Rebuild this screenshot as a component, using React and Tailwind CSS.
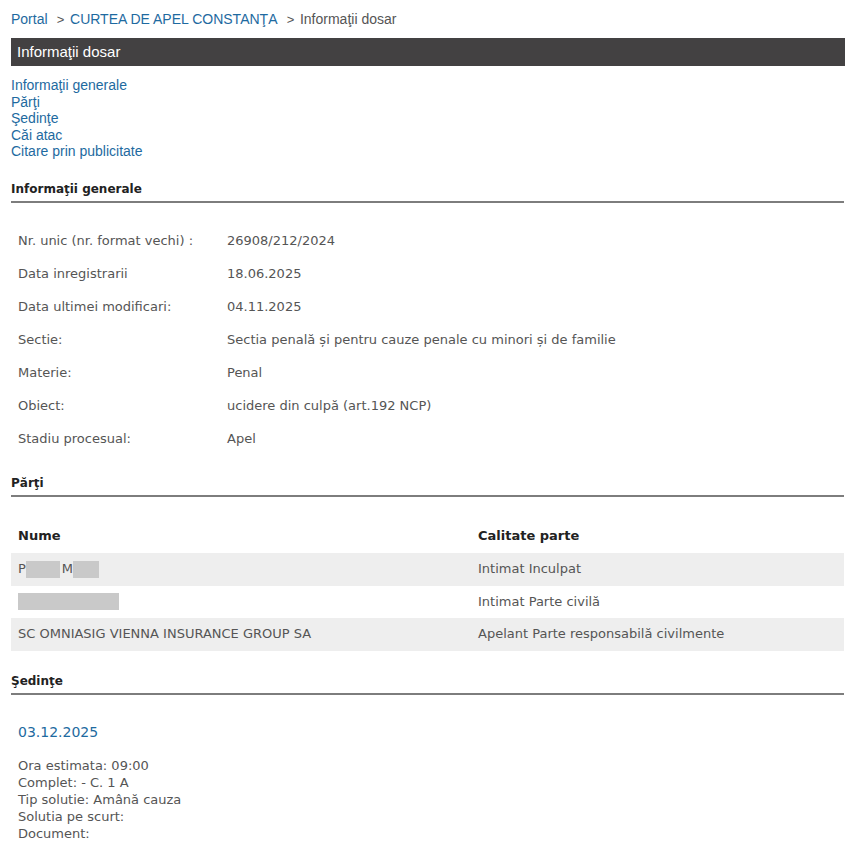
const info = [
  ["Nr. unic (nr. format vechi) :", "26908/212/2024"],
  ["Data inregistrarii", "18.06.2025"],
  ["Data ultimei modificari:", "04.11.2025"],
  ["Sectie:", "Sectia penală și pentru cauze penale cu minori și de familie"],
  ["Materie:", "Penal"],
  ["Obiect:", "ucidere din culpă (art.192 NCP)"],
  ["Stadiu procesual:", "Apel"],
];

const Redacted = ({ w }) => (
  <span className="inline-block h-[17px] bg-[#c9c9c9] align-middle" style={{ width: w }} />
);

const SectionTitle = ({ children }) => (
  <div className="border-b-2 border-[#7d7d7d] pb-[3px] font-['DejaVu_Sans',sans-serif] text-[12px] font-bold text-[#222]">
    {children}
  </div>
);

export default function App() {
  return (
    <div className="min-h-[855px] bg-white px-[11px] pt-[11px] font-['Liberation_Sans',Arial,sans-serif] text-[14px]">
      <div className="leading-[16px] text-[#555]">
        <a className="text-[#1e6aa0]">Portal</a>
        <span className="px-[2px] text-[13px]"> &nbsp;&gt;&nbsp;</span>
        <a className="text-[#1e6aa0]">CURTEA DE APEL CONSTANŢA</a>
        <span className="px-[2px] text-[13px]"> &nbsp;&gt;&nbsp;</span>
        Informaţii dosar
      </div>

      <div className="mr-[-1px] mt-[10px] flex h-[28px] items-center bg-[#434142] px-[6px] text-[15px] text-white">
        Informaţii dosar
      </div>

      <div className="mt-[11px] flex flex-col text-[#1e6aa0] leading-[16.5px]">
        <a>Informaţii generale</a>
        <a>Părţi</a>
        <a>Şedinţe</a>
        <a>Căi atac</a>
        <a>Citare prin publicitate</a>
      </div>

      <div className="mt-[20px]">
        <SectionTitle>Informaţii generale</SectionTitle>
      </div>
      <div className="mt-[22px] font-['DejaVu_Sans',sans-serif] text-[13px] text-[#555]">
        {info.map(([k, v]) => (
          <div key={k} className="flex h-[33px] items-center px-[7px]">
            <div className="w-[209px]">{k}</div>
            <div>{v}</div>
          </div>
        ))}
      </div>

      <div className="mt-[18px]">
        <SectionTitle>Părţi</SectionTitle>
      </div>
      <div className="mt-[23px] font-['DejaVu_Sans',sans-serif] text-[13px] text-[#555]">
        <div className="flex h-[33px] items-center px-[7px] font-bold text-[#222]">
          <div className="w-[460px]">Nume</div>
          <div>Calitate parte</div>
        </div>
        <div className="flex h-[33px] items-center bg-[#eeeeee] px-[7px]">
          <div className="flex w-[460px] items-center">
            P<Redacted w={34} />
            <span className="ml-[2px]">M</span>
            <Redacted w={26} />
          </div>
          <div>Intimat Inculpat</div>
        </div>
        <div className="flex h-[32px] items-center px-[7px]">
          <div className="flex w-[460px] items-center">
            <Redacted w={101} />
          </div>
          <div>Intimat Parte civilă</div>
        </div>
        <div className="flex h-[33px] items-center bg-[#eeeeee] px-[7px]">
          <div className="w-[460px]">SC OMNIASIG VIENNA INSURANCE GROUP SA</div>
          <div>Apelant Parte responsabilă civilmente</div>
        </div>
      </div>

      <div className="mt-[21px]">
        <SectionTitle>Şedinţe</SectionTitle>
      </div>
      <div className="px-[7px] font-['DejaVu_Sans',sans-serif] text-[13px] text-[#555]">
        <div className="mt-[27px] text-[14px] text-[#1e6aa0]">03.12.2025</div>
        <div className="mt-[14px] leading-[17px]">
          <div>Ora estimata: 09:00</div>
          <div>Complet: - C. 1 A</div>
          <div>Tip solutie: Amână cauza</div>
          <div>Solutia pe scurt:</div>
          <div>Document:</div>
        </div>
      </div>
    </div>
  );
}
